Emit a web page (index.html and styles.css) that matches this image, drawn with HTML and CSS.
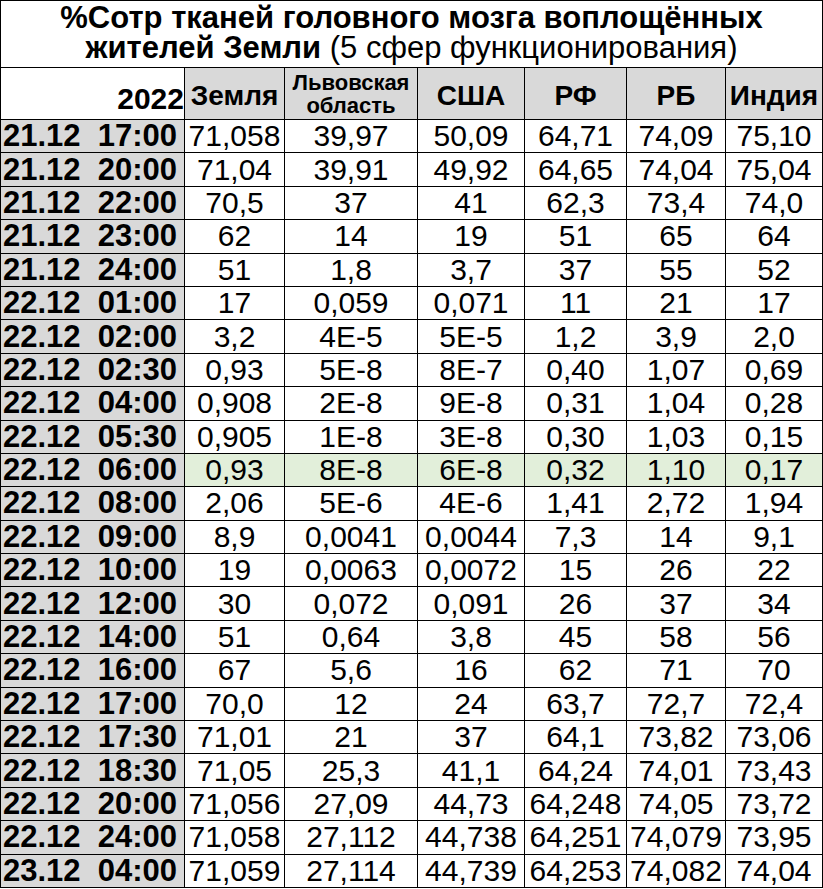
FILE: index.html
```html
<!DOCTYPE html>
<html lang="ru">
<head>
<meta charset="utf-8">
<title>%Сотр тканей головного мозга</title>
<link rel="stylesheet" href="styles.css">
</head>
<body>
<table class="sheet">
  <colgroup>
    <col class="c-date"><col class="c-earth"><col class="c-lviv"><col class="c-usa"><col class="c-rf"><col class="c-rb"><col class="c-india">
  </colgroup>
  <thead>
    <tr class="title-row">
      <th colspan="7" class="title">%Сотр тканей головного мозга воплощённых<br>жителей Земли <span class="normal">(5 сфер функционирования)</span></th>
    </tr>
    <tr class="head-row">
      <th class="year">2022</th>
      <th class="col-h">Земля</th>
      <th class="col-h small">Львовская<br>область</th>
      <th class="col-h">США</th>
      <th class="col-h">РФ</th>
      <th class="col-h">РБ</th>
      <th class="col-h">Индия</th>
    </tr>
  </thead>
  <tbody>
    <tr><th class="date">21.12&nbsp;&nbsp;17:00</th><td>71,058</td><td>39,97</td><td>50,09</td><td>64,71</td><td>74,09</td><td>75,10</td></tr>
    <tr><th class="date">21.12&nbsp;&nbsp;20:00</th><td>71,04</td><td>39,91</td><td>49,92</td><td>64,65</td><td>74,04</td><td>75,04</td></tr>
    <tr><th class="date">21.12&nbsp;&nbsp;22:00</th><td>70,5</td><td>37</td><td>41</td><td>62,3</td><td>73,4</td><td>74,0</td></tr>
    <tr><th class="date">21.12&nbsp;&nbsp;23:00</th><td>62</td><td>14</td><td>19</td><td>51</td><td>65</td><td>64</td></tr>
    <tr><th class="date">21.12&nbsp;&nbsp;24:00</th><td>51</td><td>1,8</td><td>3,7</td><td>37</td><td>55</td><td>52</td></tr>
    <tr><th class="date">22.12&nbsp;&nbsp;01:00</th><td>17</td><td>0,059</td><td>0,071</td><td>11</td><td>21</td><td>17</td></tr>
    <tr><th class="date">22.12&nbsp;&nbsp;02:00</th><td>3,2</td><td>4E-5</td><td>5E-5</td><td>1,2</td><td>3,9</td><td>2,0</td></tr>
    <tr><th class="date">22.12&nbsp;&nbsp;02:30</th><td>0,93</td><td>5E-8</td><td>8E-7</td><td>0,40</td><td>1,07</td><td>0,69</td></tr>
    <tr><th class="date">22.12&nbsp;&nbsp;04:00</th><td>0,908</td><td>2E-8</td><td>9E-8</td><td>0,31</td><td>1,04</td><td>0,28</td></tr>
    <tr><th class="date">22.12&nbsp;&nbsp;05:30</th><td>0,905</td><td>1E-8</td><td>3E-8</td><td>0,30</td><td>1,03</td><td>0,15</td></tr>
    <tr class="hl"><th class="date">22.12&nbsp;&nbsp;06:00</th><td>0,93</td><td>8E-8</td><td>6E-8</td><td>0,32</td><td>1,10</td><td>0,17</td></tr>
    <tr><th class="date">22.12&nbsp;&nbsp;08:00</th><td>2,06</td><td>5E-6</td><td>4E-6</td><td>1,41</td><td>2,72</td><td>1,94</td></tr>
    <tr><th class="date">22.12&nbsp;&nbsp;09:00</th><td>8,9</td><td>0,0041</td><td>0,0044</td><td>7,3</td><td>14</td><td>9,1</td></tr>
    <tr><th class="date">22.12&nbsp;&nbsp;10:00</th><td>19</td><td>0,0063</td><td>0,0072</td><td>15</td><td>26</td><td>22</td></tr>
    <tr><th class="date">22.12&nbsp;&nbsp;12:00</th><td>30</td><td>0,072</td><td>0,091</td><td>26</td><td>37</td><td>34</td></tr>
    <tr><th class="date">22.12&nbsp;&nbsp;14:00</th><td>51</td><td>0,64</td><td>3,8</td><td>45</td><td>58</td><td>56</td></tr>
    <tr><th class="date">22.12&nbsp;&nbsp;16:00</th><td>67</td><td>5,6</td><td>16</td><td>62</td><td>71</td><td>70</td></tr>
    <tr><th class="date">22.12&nbsp;&nbsp;17:00</th><td>70,0</td><td>12</td><td>24</td><td>63,7</td><td>72,7</td><td>72,4</td></tr>
    <tr><th class="date">22.12&nbsp;&nbsp;17:30</th><td>71,01</td><td>21</td><td>37</td><td>64,1</td><td>73,82</td><td>73,06</td></tr>
    <tr><th class="date">22.12&nbsp;&nbsp;18:30</th><td>71,05</td><td>25,3</td><td>41,1</td><td>64,24</td><td>74,01</td><td>73,43</td></tr>
    <tr><th class="date">22.12&nbsp;&nbsp;20:00</th><td>71,056</td><td>27,09</td><td>44,73</td><td>64,248</td><td>74,05</td><td>73,72</td></tr>
    <tr><th class="date">22.12&nbsp;&nbsp;24:00</th><td>71,058</td><td>27,112</td><td>44,738</td><td>64,251</td><td>74,079</td><td>73,95</td></tr>
    <tr><th class="date">23.12&nbsp;&nbsp;04:00</th><td>71,059</td><td>27,114</td><td>44,739</td><td>64,253</td><td>74,082</td><td>74,04</td></tr>
  </tbody>
</table>
</body>
</html>
```
FILE: styles.css
```css
html, body {
  margin: 0;
  padding: 0;
  background: #ffffff;
}
body {
  font-family: "Liberation Sans", Arial, sans-serif;
  color: #000;
}
.sheet {
  border-collapse: collapse;
  table-layout: fixed;
  width: 822px;
}
.c-date { width: 184px; }
.c-earth { width: 100px; }
.c-lviv { width: 133px; }
.c-usa { width: 107px; }
.c-rf { width: 102px; }
.c-rb { width: 99px; }
.c-india { width: 97px; }

.sheet th, .sheet td {
  border: 1px solid #000;
  padding: 0;
  overflow: hidden;
  white-space: nowrap;
}
.title-row th {
  height: 64px;
  font-size: 31px;
  line-height: 30px;
  font-weight: bold;
  text-align: center;
  vertical-align: middle;
  padding-bottom: 2px;
}
.title .normal { font-weight: normal; }
.head-row th {
  height: 46px;
  font-size: 28px;
  line-height: 30px;
  font-weight: bold;
  text-align: center;
  vertical-align: middle;
}
.head-row .year {
  text-align: right;
  background: #fff;
  font-size: 30px;
  vertical-align: bottom;
  padding: 0 0 5px 0;
}
.head-row .col-h {
  background: #d9d9d9;
  padding-top: 5px;
}
.head-row .small {
  font-size: 22px;
  line-height: 23px;
  padding-top: 0;
}
tbody tr { height: 33.4px; }
.date {
  background: #d9d9d9;
  text-align: left;
  font-weight: bold;
  font-size: 31px;
  line-height: 30px;
  padding-left: 2px !important;
}
tbody td {
  font-size: 30px;
  text-align: center;
  line-height: 30px;
}
.hl td { background: #e2efda; }
```
